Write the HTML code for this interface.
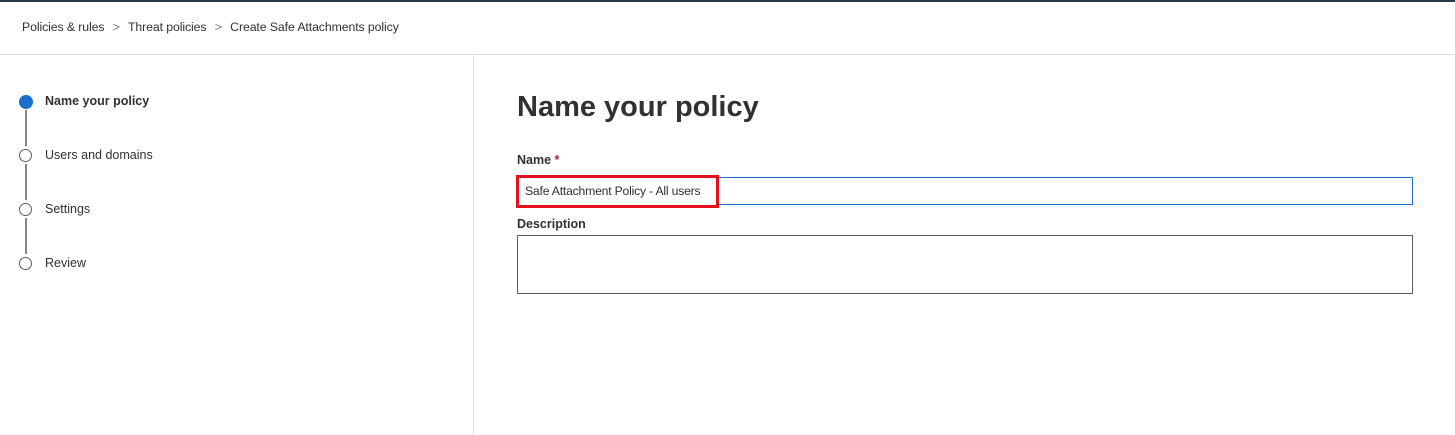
<!DOCTYPE html>
<html><head><style>
body{margin:0;width:1455px;height:435px;background:#fff;font-family:"Liberation Sans",sans-serif;color:#323130;position:relative;overflow:hidden}
.a{position:absolute}
</style></head><body>
<div class="a" style="left:0;top:0;width:1455px;height:2px;background:#2b3a4a"></div>
<div class="a" style="left:22px;top:20px;font-size:12.3px;color:#323130;letter-spacing:-0.1px">Policies &amp; rules <span style="margin:0 5px;color:#777">&gt;</span> Threat policies <span style="margin:0 5px;color:#777">&gt;</span> Create Safe Attachments policy</div>
<div class="a" style="left:0;top:54px;width:1455px;height:1px;background:#e1e1e1"></div>
<div class="a" style="left:473px;top:55px;width:1px;height:380px;background:#e1e1e1"></div>

<div class="a" style="left:19px;top:95px;width:14px;height:14px;border-radius:50%;background:#1a6fd0"></div>
<div class="a" style="left:25px;top:110px;width:2px;height:36px;background:#8a8886"></div>
<div class="a" style="left:19px;top:149px;width:11px;height:11px;border-radius:50%;border:1.5px solid #605e5c"></div>
<div class="a" style="left:25px;top:164px;width:2px;height:36px;background:#8a8886"></div>
<div class="a" style="left:19px;top:203px;width:11px;height:11px;border-radius:50%;border:1.5px solid #605e5c"></div>
<div class="a" style="left:25px;top:218px;width:2px;height:36px;background:#8a8886"></div>
<div class="a" style="left:19px;top:257px;width:11px;height:11px;border-radius:50%;border:1.5px solid #605e5c"></div>
<div class="a" style="left:45px;top:94px;font-size:12.5px;font-weight:bold">Name your policy</div>
<div class="a" style="left:45px;top:148px;font-size:12.5px">Users and domains</div>
<div class="a" style="left:45px;top:202px;font-size:12.5px">Settings</div>
<div class="a" style="left:45px;top:256px;font-size:12.5px">Review</div>

<div class="a" style="left:517px;top:91px;font-size:29px;font-weight:bold">Name your policy</div>
<div class="a" style="left:517px;top:153px;font-size:12.5px;font-weight:bold">Name <span style="color:#a4262c">*</span></div>
<div class="a" style="left:517px;top:177px;width:894px;height:26px;border:1px solid #1a6fd0"></div>
<div class="a" style="left:516px;top:175px;width:197px;height:27px;border:3px solid #e3101e;background:#fff"></div>
<div class="a" style="left:525px;top:184px;font-size:12.2px;letter-spacing:-0.2px">Safe Attachment Policy - All users</div>
<div class="a" style="left:517px;top:217px;font-size:12.5px;font-weight:bold">Description</div>
<div class="a" style="left:517px;top:235px;width:894px;height:57px;border:1px solid #605e5c"></div>
</body></html>
